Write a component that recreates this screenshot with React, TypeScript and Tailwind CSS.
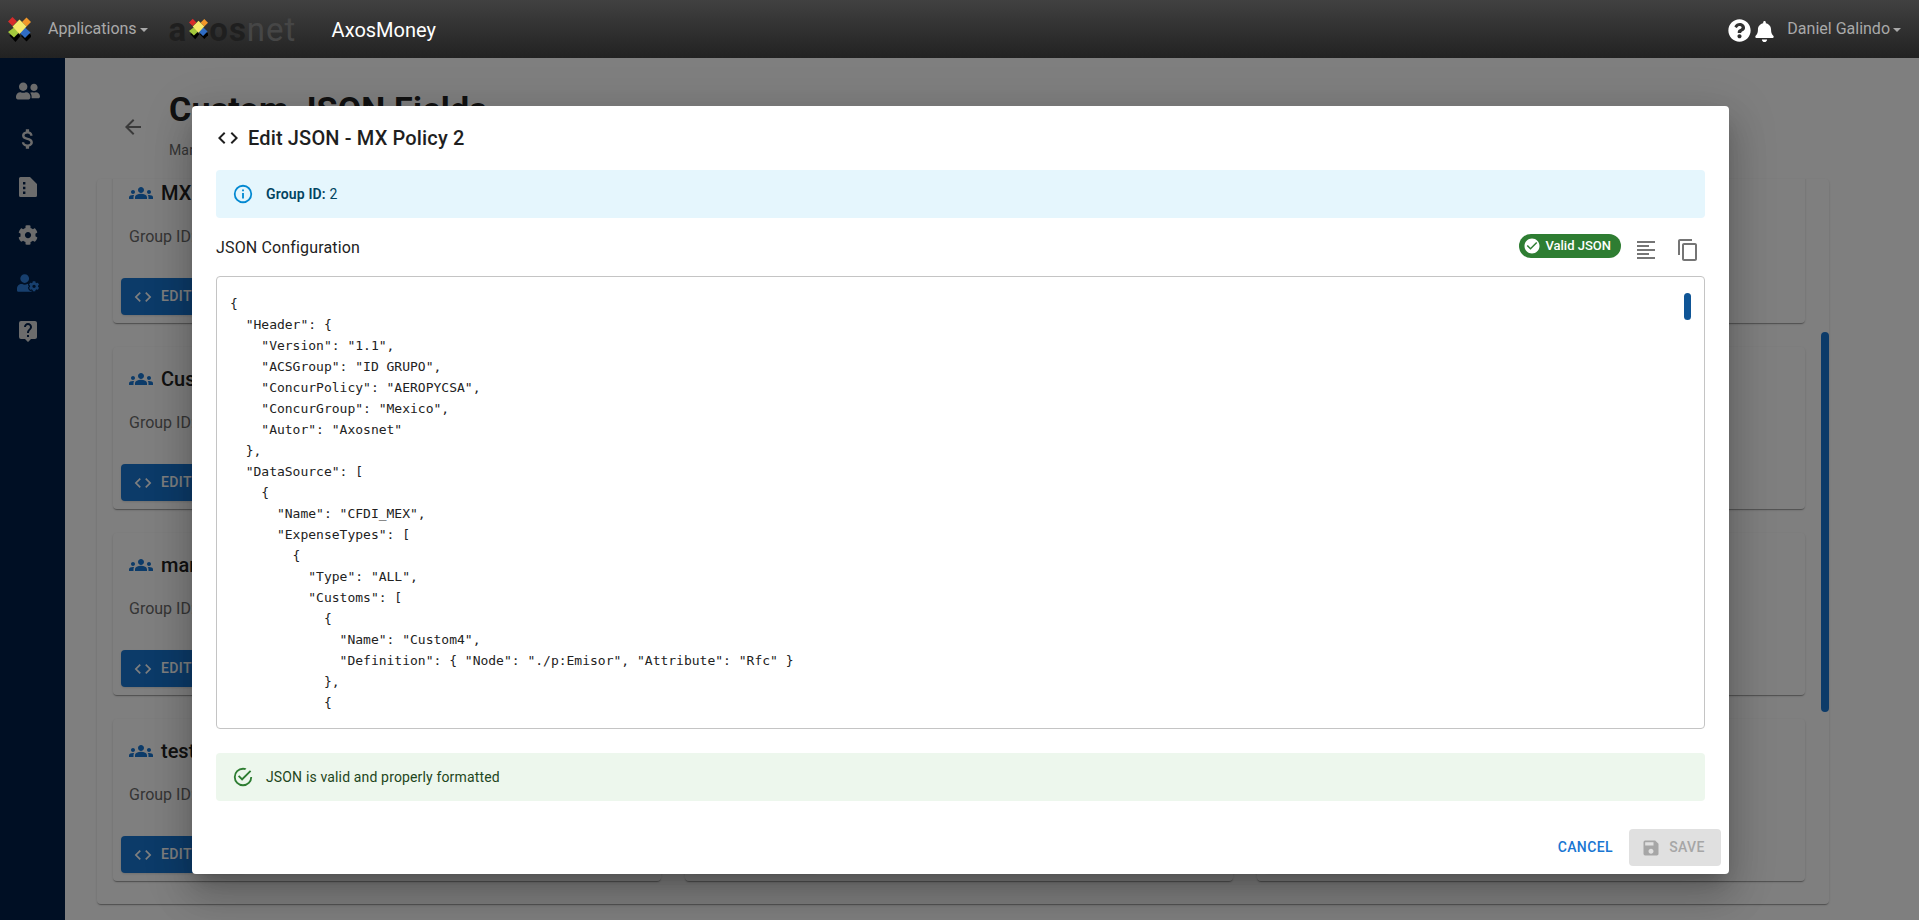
import React from "react";
import {
  MdArrowBack,
  MdAttachMoney,
  MdCheckCircle,
  MdCode,
  MdContentCopy,
  MdFormatAlignLeft,
  MdGroups,
  MdLiveHelp,
  MdSave,
} from "react-icons/md";
import {
  FaBell,
  FaCog,
  FaQuestionCircle,
  FaUserCog,
  FaUserFriends,
} from "react-icons/fa";

const jsonText = `{
  "Header": {
    "Version": "1.1",
    "ACSGroup": "ID GRUPO",
    "ConcurPolicy": "AEROPYCSA",
    "ConcurGroup": "Mexico",
    "Autor": "Axosnet"
  },
  "DataSource": [
    {
      "Name": "CFDI_MEX",
      "ExpenseTypes": [
        {
          "Type": "ALL",
          "Customs": [
            {
              "Name": "Custom4",
              "Definition": { "Node": "./p:Emisor", "Attribute": "Rfc" }
            },
            {`;

const cards = [
  { name: "MX Policy 2", id: 2 },
  { name: "Custom Policy", id: 3 },
  { name: "Test Group", id: 4 },
  { name: "Custom Group", id: 5 },
  { name: "Customs", id: 6 },
  { name: "Policy 7", id: 7 },
  { name: "mario", id: 8 },
  { name: "Group 9", id: 9 },
  { name: "Group 10", id: 10 },
  { name: "test", id: 11 },
  { name: "Group 12", id: 12 },
  { name: "Group 13", id: 13 },
];

const LogoMark = ({ className }: { className: string }) => (
  <svg viewBox="0 0 23 25" className={className}>
    <polygon points="7.5,14 12.500,19 7.500,25 1.500,18.500" fill="#000" />
    <polygon points="18.500,14 24,19 18.500,24.500 13,19" fill="#000" />
    <polygon points="4.500,0 9,4.500 4.500,9 0,4.500" fill="#d62b2b" />
    <polygon points="18.500,0.500 23,5 18.500,9.500 14,5" fill="#f2982a" />
    <polygon points="6,10.500 11,15.500 6,20.500 0,15" fill="#a3c83c" />
    <polygon points="17,10.500 22.500,15.500 17,21 11.500,15.500" fill="#2f6cc4" />
    <polygon points="11.500,2.500 18.500,9.500 11.500,17 4.500,9.500" fill="#f6e96b" />
  </svg>
);

const Caret = () => (
  <span className="ml-[3px] inline-block border-x-[4px] border-t-[4px] border-x-transparent border-t-current align-middle" />
);

const InfoIcon = () => (
  <svg viewBox="0 0 24 24" className="h-[22px] w-[22px] fill-[#0288d1]">
    <path d="M11,9H13V7H11V9M12,20C7.59,20 4,16.41 4,12C4,7.59 7.59,4 12,4C16.41,4 20,7.59 20,12C20,16.41 16.41,20 12,20M12,2A10,10 0 0,0 2,12A10,10 0 0,0 12,22A10,10 0 0,0 22,12A10,10 0 0,0 12,2M11,17H13V11H11V17Z" />
  </svg>
);

const SuccessIcon = () => (
  <svg viewBox="0 0 24 24" className="h-[22px] w-[22px] fill-[#2e7d32]">
    <path d="M20,12A8,8 0 0,1 12,20A8,8 0 0,1 4,12A8,8 0 0,1 12,4C12.76,4 13.5,4.11 14.2,4.31L15.77,2.74C14.61,2.26 13.34,2 12,2A10,10 0 0,0 2,12A10,10 0 0,0 12,22A10,10 0 0,0 22,12M7.91,10.08L6.5,11.5L11,16L21,6L19.59,4.58L11,13.17L7.91,10.08Z" />
  </svg>
);

const DocIcon = () => (
  <svg viewBox="0 0 18 20" className="h-[20px] w-[18px] fill-[#d8d8d8]">
    <path
      fillRule="evenodd"
      d="M1.5 0H11l7 7v11.5a1.5 1.500 0 0 1-1.500 1.500h-15A1.500 1.500 0 0 1 0 18.500v-17A1.500 1.500 0 0 1 1.500 0ZM4 5v2.400h2.400V5H4Zm0 4.800v2.400h2.400V9.800H4Zm0 4.800V17h2.400v-2.400H4Z"
    />
  </svg>
);

const Header = () => (
  <header className="relative z-20 flex h-[58px] shrink-0 items-center bg-gradient-to-b from-[#414141] to-[#222222] pl-2 pr-[18px]">
    <LogoMark className="h-[25px] w-[23px]" />
    <span className="ml-[17px] text-[16px] text-[#a9a9a9]">
      Applications
      <Caret />
    </span>
    <div className="relative ml-[21px] flex h-[34px] w-[134px] items-center text-[33px] font-bold leading-none tracking-[1px]">
      <span className="text-[#1f1f1f]">a</span>
      <span className="ml-[22px] text-[#1f1f1f]">os</span>
      <span className="font-normal text-[#464646]">net</span>
      <LogoMark className="absolute left-[20px] top-[6px] h-[22px] w-[19px]" />
    </div>
    <span className="ml-[29px] mt-[2px] text-[20px] text-white">AxosMoney</span>
    <div className="ml-auto flex items-center">
      <FaQuestionCircle className="mt-[3px] h-[23px] w-[23px] text-white" />
      <FaBell className="ml-[4px] mt-[4px] h-[21px] w-[19px] text-white" />
      <span className="ml-[13px] text-[16px] text-[#a9a9a9]">
        Daniel Galindo
        <Caret />
      </span>
    </div>
  </header>
);

const Sidebar = () => (
  <aside className="flex w-[65px] shrink-0 flex-col items-center bg-[#001f48] pr-[10px] pt-[9px] text-[#d8d8d8]">
    <div className="flex h-12 items-center">
      <FaUserFriends className="h-[22px] w-[24px]" />
    </div>
    <div className="flex h-12 items-center">
      <MdAttachMoney className="h-[26px] w-[26px]" />
    </div>
    <div className="flex h-12 items-center">
      <DocIcon />
    </div>
    <div className="flex h-12 items-center">
      <FaCog className="h-[20px] w-[20px]" />
    </div>
    <div className="flex h-12 items-center text-[#2f7fdc]">
      <FaUserCog className="h-[18px] w-[22px]" />
    </div>
    <div className="flex h-12 items-center">
      <MdLiveHelp className="h-[24px] w-[24px]" />
    </div>
  </aside>
);

const GroupCard = ({ name, id }: { name: string; id: number }) => (
  <div className="h-[162px] rounded bg-white px-2 shadow-[0_2px_1px_-1px_rgba(0,0,0,0.2),0_1px_1px_0_rgba(0,0,0,0.14),0_1px_3px_0_rgba(0,0,0,0.12)]">
    <div className="mt-4 flex h-[32px] items-center px-2">
      <MdGroups className="h-[24px] w-[24px] text-[#1976d2]" />
      <span className="ml-2 text-[20px] font-medium text-[#222]">{name}</span>
    </div>
    <p className="mt-[16px] px-2 text-[16px] leading-6 text-[#6b6b6b]">
      Group ID: {id}
    </p>
    <button className="mt-[29px] flex h-[37px] items-center rounded bg-[#1976d2] px-[12px] text-[14px] font-medium tracking-[0.4px] text-white shadow">
      <MdCode className="h-[20px] w-[20px]" />
      <span className="ml-2">EDIT JSON</span>
    </button>
  </div>
);

const MainContent = () => (
  <main className="min-w-0 flex-1 bg-white pt-[31px]">
    <div className="ml-[56px] flex h-[75px] items-center">
      <MdArrowBack className="h-[24px] w-[24px] text-[#757575]" />
      <div className="ml-6 -mt-[4px]">
        <h1 className="text-[34px] font-bold leading-[42px] tracking-[0.2px] text-[#222]">
          Custom JSON Fields
        </h1>
        <p className="mt-[10px] text-[14px] leading-[21px] tracking-[0.15px] text-[#6b6b6b]">
          Manage custom JSON configurations
        </p>
      </div>
    </div>
    <section className="relative ml-[32px] mt-[15px] h-[725px] w-[1732px] overflow-hidden rounded bg-white pl-4 pr-6 shadow-[0_2px_1px_-1px_rgba(0,0,0,0.2),0_1px_1px_0_rgba(0,0,0,0.14),0_1px_3px_0_rgba(0,0,0,0.12)]">
      <div className="-mt-[18px] grid grid-cols-3 gap-6">
        {cards.map((c) => (
          <GroupCard key={c.id} name={c.name} id={c.id} />
        ))}
      </div>
      <div className="absolute right-0 top-[153px] h-[380px] w-2 rounded bg-[#1976d2]" />
    </section>
  </main>
);

const EditDialog = () => (
  <div className="absolute inset-x-0 bottom-0 top-[58px] z-10 flex items-center justify-center bg-black/50 pl-[2px] pt-[2px]">
    <div className="flex h-[768px] w-[1537px] flex-col rounded bg-white px-6 shadow-[0_11px_15px_-7px_rgba(0,0,0,0.2),0_24px_38px_3px_rgba(0,0,0,0.14),0_9px_46px_8px_rgba(0,0,0,0.12)]">
      <div className="flex h-[64px] shrink-0 items-center pb-[1px] text-[#1f1f1f]">
        <MdCode className="h-[24px] w-[24px]" />
        <h2 className="ml-2 text-[20px] font-medium tracking-[0.15px]">
          Edit JSON - MX Policy 2
        </h2>
      </div>

      <div className="flex h-[48px] shrink-0 items-center rounded bg-[#e5f6fd] pl-4 text-[14px] tracking-[0.15px] text-[#014361]">
        <InfoIcon />
        <span className="ml-[12px]">
          <b className="font-semibold">Group ID:</b> 2
        </span>
      </div>

      <div className="mb-[14px] mt-4 flex h-[28px] shrink-0 items-center">
        <span className="text-[16px] tracking-[0.15px] text-[#222]">
          JSON Configuration
        </span>
        <span className="ml-auto -mt-[4px] flex h-[24px] items-center rounded-full bg-[#2e7d32] pl-[4px] pr-[10px] text-[13px] font-medium text-white">
          <MdCheckCircle className="h-[18px] w-[18px]" />
          <span className="ml-[4px]">Valid JSON</span>
        </span>
        <MdFormatAlignLeft className="ml-[13px] mt-[3px] h-[24px] w-[24px] text-[#757575]" />
        <MdContentCopy className="ml-[18px] mr-[5px] mt-[3px] h-[24px] w-[24px] text-[#757575]" />
      </div>

      <div className="relative h-[453px] shrink-0 overflow-hidden rounded border border-[#c4c4c4] px-[13px] pt-[16px]">
        <pre className="font-['DejaVu_Sans_Mono',monospace] text-[13px] leading-[21px] text-[#222]">
          {jsonText}
        </pre>
        <div className="absolute right-[13px] top-[16px] h-[27px] w-[7px] rounded bg-[#0f5596]" />
      </div>

      <div className="mt-6 flex h-[48px] shrink-0 items-center rounded bg-[#edf7ed] pl-4 text-[14px] tracking-[0.15px] text-[#1e4620]">
        <SuccessIcon />
        <span className="ml-[12px]">JSON is valid and properly formatted</span>
      </div>

      <div className="-mr-4 mb-2 mt-auto flex items-center justify-end">
        <button className="text-[14px] font-medium tracking-[0.4px] text-[#1976d2]">
          CANCEL
        </button>
        <button className="ml-[16px] flex h-[37px] w-[92px] items-center justify-center rounded bg-[#e0e0e0] pr-[4px] text-[14px] font-medium tracking-[0.4px] text-[#a6a6a6]">
          <MdSave className="h-[20px] w-[20px]" />
          <span className="ml-2">SAVE</span>
        </button>
      </div>
    </div>
  </div>
);

const App = () => {
  return (
    <div className="relative flex h-screen flex-col overflow-hidden font-['Roboto',sans-serif]">
      <Header />
      <div className="flex min-h-0 flex-1">
        <Sidebar />
        <MainContent />
      </div>
      <EditDialog />
    </div>
  );
};

export default App;
